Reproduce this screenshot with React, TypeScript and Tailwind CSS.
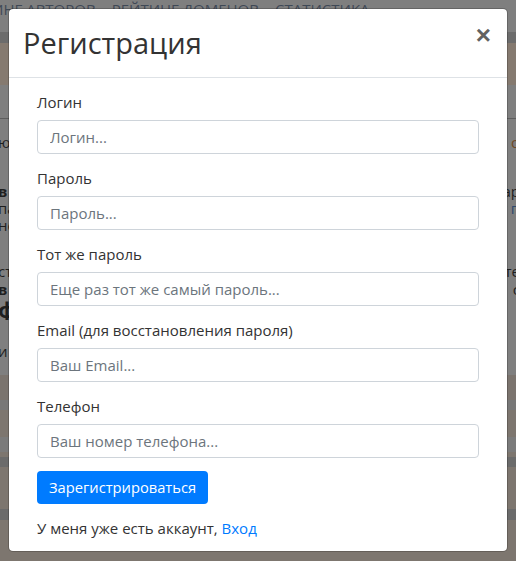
const fields = [
  { label: 'Логин', placeholder: 'Логин...', type: 'text' },
  { label: 'Пароль', placeholder: 'Пароль...', type: 'password' },
  { label: 'Тот же пароль', placeholder: 'Еще раз тот же самый пароль...', type: 'password' },
  { label: 'Email (для восстановления пароля)', placeholder: 'Ваш Email...', type: 'email' },
  { label: 'Телефон', placeholder: 'Ваш номер телефона...', type: 'tel' },
];

// Fragments of the page under the backdrop that peek out on both sides of the dialog
const pageLines = [
  { h: 'h-[22px]', left: 'ю', right: 'о', rightClass: 'text-[#6e4a26]' },
  { h: 'h-[30px]', left: '', right: '' },
  { h: 'h-[17px]', left: 'в', leftBold: true, right: 'ар' },
  { h: 'h-[17px]', left: 'па', right: 'у п', rightClass: 'text-[#2f4a6e]' },
  { h: 'h-[17px]', left: 'не', right: '' },
  { h: 'h-[28px]', left: '', right: '' },
  { h: 'h-[18px]', left: 'ст', right: 'те' },
  { h: 'h-[18px]', left: 'в', leftBold: true, right: 'с' },
  { h: 'h-[22px]', left: 'ф', leftBig: true, right: '' },
  { h: 'h-[20px]', left: '', right: '' },
  { h: 'h-[22px]', left: 'и', right: '' },
];

function BackgroundPage() {
  return (
    <div className="flex flex-col">
      <div className="h-8 overflow-hidden whitespace-nowrap bg-[#7f7f7f] pt-[1px] text-[15px] leading-[16px] text-[#3f4956]">
        <span className="ml-[-8px]">ИНГ АВТОРОВ</span>
        <span className="ml-4">РЕЙТИНГ ДОМЕНОВ</span>
        <span className="ml-4">СТАТИСТИКА</span>
      </div>
      <div className="h-[11px] bg-[#6c6c6c]" />
      <div className="h-[42px] bg-[#857a70]" />
      <div className="h-[33px] bg-[#7f7f7f]" />
      <div className="h-px bg-[#5e5e5e]" />
      <div className="flex h-[256px] flex-col bg-[#7f7f7f] pt-[12px] text-[15px] text-[#1f1f1f]">
        {pageLines.map((l, i) => (
          <div key={i} className={`${l.h} flex items-center justify-between overflow-hidden leading-none`}>
            <span
              className={`${l.leftBold ? 'font-bold' : ''} ${l.leftBig ? 'text-[22px] font-bold' : ''} ml-[-2px]`}
            >
              {l.left}
            </span>
            <span className={`${l.rightClass ?? ''} mr-[-4px]`}>{l.right}</span>
          </div>
        ))}
      </div>
      <div className="h-[25px] bg-[#7b746e]" />
      <div className="h-[10px] bg-[#787878]" />
      <div className="h-[27px] bg-[#7d766f]" />
      <div className="h-[15px] bg-[#7b7b7b]" />
      <div className="h-[5px] bg-[#7d766f]" />
      <div className="h-[10px] bg-[#6b6b6b]" />
      <div className="h-[42px] bg-[#7d766f]" />
      <div className="h-[11px] bg-[#6b6b6b]" />
      <div className="h-[41px] bg-[#7d766f]" />
    </div>
  );
}

export default function App() {
  return (
    <div className="relative h-[561px] w-[516px] overflow-hidden bg-[#7f7f7f] font-['Open_Sans',sans-serif]">
      <BackgroundPage />

      {/* Modal */}
      <div className="absolute inset-x-0 top-0 px-2 pt-2">
        <div className="rounded-[5px] border border-black/20 bg-white bg-clip-padding">
          <header className="flex items-start justify-between border-b border-[#dee2e6] px-4 py-4">
            <h2 className="ml-[-2px] text-[29px] font-normal leading-9 text-[#333]">Регистрация</h2>
            <button className="mt-[-2px] font-['Liberation_Sans',sans-serif] text-[26px] font-bold leading-[24px] text-[#626262]">
              ×
            </button>
          </header>

          <div className="px-7 pt-[13px] pb-3 text-[15px] text-[#333]">
            {fields.map((f) => (
              <div key={f.label} className="mb-[13px]">
                <label className="mb-[7px] block pt-px leading-[21px]">{f.label}</label>
                <input
                  type={f.type}
                  placeholder={f.placeholder}
                  className="block h-[34px] w-full rounded border border-[#ced4da] px-3 text-[15px] text-[#495057] placeholder:text-[#6c757d]"
                />
              </div>
            ))}
            <button className="h-[33px] rounded bg-[#007bff] px-3 text-[14.7px] leading-[21px] text-white">
              Зарегистрироваться
            </button>
            <p className="mt-[14px] leading-[21px]">
              У меня уже есть аккаунт, <a className="text-[#007bff]">Вход</a>
            </p>
          </div>
        </div>
      </div>
    </div>
  );
}
